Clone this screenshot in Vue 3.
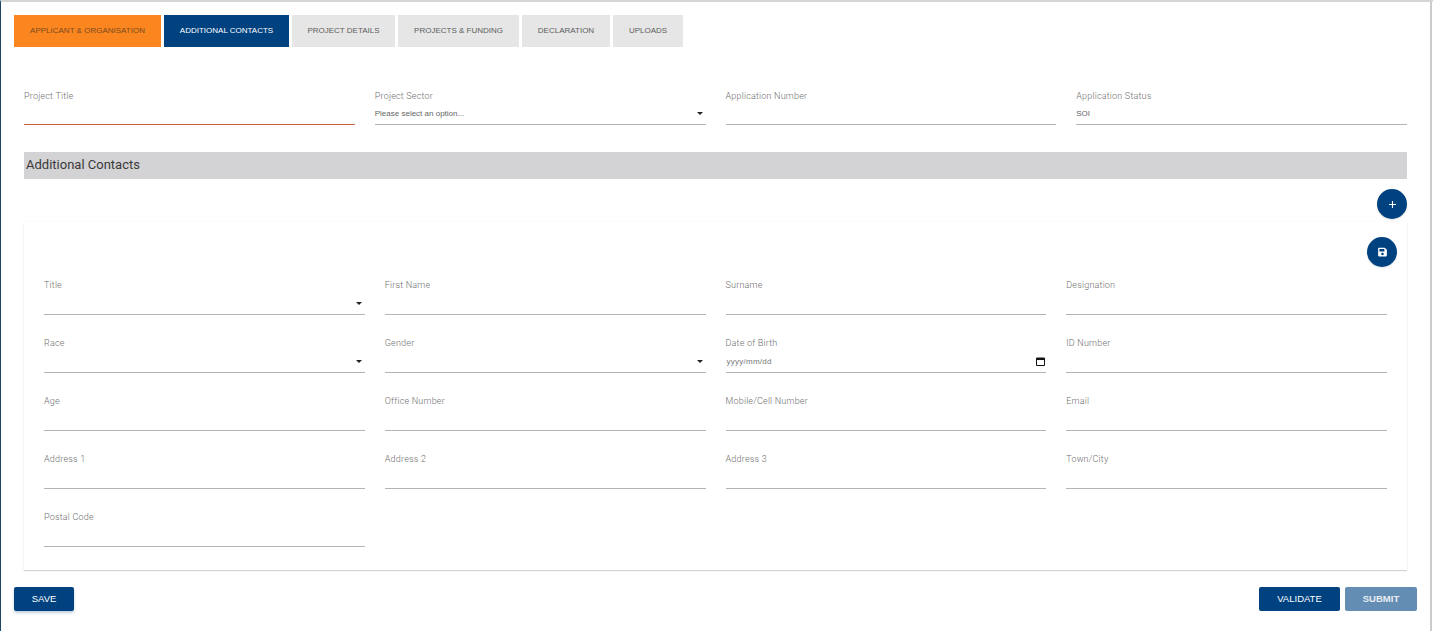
<script setup>
const tabs = [
  { label: "APPLICANT & ORGANISATION", cls: "tab-done", width: "147px" },
  { label: "ADDITIONAL CONTACTS", cls: "tab-active", width: "125px" },
  { label: "PROJECT DETAILS", cls: "tab-details", width: "103px" },
  { label: "PROJECTS & FUNDING", cls: "", width: "121px" },
  { label: "DECLARATION", cls: "", width: "88px" },
  { label: "UPLOADS", cls: "", width: "70px" },
];

const contactFields = [
  { label: "Title", type: "select" },
  { label: "First Name" },
  { label: "Surname" },
  { label: "Designation" },
  { label: "Race", type: "select" },
  { label: "Gender", type: "select" },
  { label: "Date of Birth", type: "date" },
  { label: "ID Number" },
  { label: "Age" },
  { label: "Office Number" },
  { label: "Mobile/Cell Number" },
  { label: "Email" },
  { label: "Address 1" },
  { label: "Address 2" },
  { label: "Address 3" },
  { label: "Town/City" },
  { label: "Postal Code" },
];
</script>

<template>
  <div class="page">
    <nav class="tabs">
      <button
        v-for="tab in tabs"
        :key="tab.label"
        class="tab"
        :class="tab.cls"
        :style="{ width: tab.width }"
      >
        {{ tab.label }}
      </button>
    </nav>

    <section class="project-fields">
      <div class="field field-invalid">
        <label>Project Title</label>
        <div class="control"></div>
      </div>
      <div class="field">
        <label>Project Sector</label>
        <div class="control">
          <span class="value">Please select an option...</span>
          <span class="caret"></span>
        </div>
      </div>
      <div class="field">
        <label>Application Number</label>
        <div class="control"></div>
      </div>
      <div class="field">
        <label>Application Status</label>
        <div class="control"><span class="value">SOI</span></div>
      </div>
    </section>

    <h2 class="section-title">Additional Contacts</h2>

    <div class="add-row">
      <button class="fab" aria-label="Add contact">
        <svg width="9" height="9" viewBox="0 0 9 9">
          <path d="M4.5 1v7M1 4.5h7" stroke="#fff" stroke-width="1.1" fill="none" />
        </svg>
      </button>
    </div>

    <div class="card">
      <div class="card-actions">
        <button class="fab" aria-label="Save contact">
          <svg width="9" height="10" viewBox="0 0 448 512">
            <path
              fill="#fff"
              d="M433.941 129.941l-83.882-83.882A48 48 0 0 0 316.118 32H48C21.49 32 0 53.49 0 80v352c0 26.51 21.49 48 48 48h352c26.51 0 48-21.49 48-48V163.882a48 48 0 0 0-14.059-33.941zM224 416c-35.346 0-64-28.654-64-64 0-35.346 28.654-64 64-64s64 28.654 64 64c0 35.346-28.654 64-64 64zm96-304.52V212c0 6.627-5.373 12-12 12H76c-6.627 0-12-5.373-12-12V108c0-6.627 5.373-12 12-12h228.52c3.183 0 6.235 1.264 8.485 3.515l3.48 3.48A11.996 11.996 0 0 1 320 111.48z"
            />
          </svg>
        </button>
      </div>

      <div class="contact-grid">
        <div v-for="field in contactFields" :key="field.label" class="field">
          <label>{{ field.label }}</label>
          <div class="control">
            <span v-if="field.type === 'select'" class="caret"></span>
            <template v-if="field.type === 'date'">
              <span class="value value-date">yyyy/mm/dd</span>
              <svg class="calendar" width="9" height="9" viewBox="0 0 9 9">
                <path d="M0.5 1h8v7.5h-8z" fill="none" stroke="#111" />
                <path d="M0.5 1h8v2h-8z" fill="#111" />
              </svg>
            </template>
          </div>
        </div>
      </div>
    </div>

    <footer class="actions">
      <button class="btn btn-save">SAVE</button>
      <div class="actions-right">
        <button class="btn btn-validate">VALIDATE</button>
        <button class="btn btn-submit">SUBMIT</button>
      </div>
    </footer>
  </div>
</template>

<style scoped>
.page {
  box-sizing: border-box;
  width: 1433px;
  height: 631px;
  overflow: hidden;
  border-top: 2px solid #d3d6d3;
  border-left: 1px solid #1f4466;
  background: #fff;
  padding: 13px 0 0 13px;
  font-family: "Liberation Sans", Arial, sans-serif;
  position: relative;
}

.page::after {
  content: "";
  position: absolute;
  top: 0;
  bottom: 0;
  left: 1429px;
  width: 2px;
  background: #c9cbcd;
}

.tabs {
  display: flex;
  gap: 3px;
  height: 32px;
}

.tab {
  box-sizing: border-box;
  height: 32px;
  padding: 0 0 2px;
  border: none;
  background: #e6e6e6;
  color: #5c5c5c;
  font-family: inherit;
  font-size: 8px;
  white-space: nowrap;
}

.tab-done {
  background: #fb861f;
  color: #7a4a20;
}

.tab-active {
  background: #00427f;
  color: #fff;
}

.project-fields,
.contact-grid {
  display: grid;
  grid-template-columns: repeat(4, 1fr);
  column-gap: 20px;
}

.project-fields {
  width: 1383px;
  margin: 42px 0 0 10px;
}

.field label {
  display: block;
  height: 14px;
  line-height: 14px;
  font-family: Roboto, sans-serif;
  font-size: 9px;
  font-weight: 300;
  letter-spacing: 0.2px;
  color: #6f6f6f;
}

.control {
  box-sizing: border-box;
  position: relative;
  display: flex;
  align-items: center;
  height: 20px;
  margin-top: 2px;
  padding-bottom: 2px;
  border-bottom: 1px solid #b4b4b4;
}

.contact-grid .control {
  height: 21px;
}

.field-invalid .control {
  border-bottom-color: #c9623a;
}

.value {
  font-family: "Liberation Sans", Arial, sans-serif;
  font-size: 8px;
  color: #666;
}

.value-date {
  padding-left: 1px;
  letter-spacing: 0.25px;
  color: #777;
}

.caret {
  position: absolute;
  right: 3px;
  bottom: 9px;
  border-left: 3px solid transparent;
  border-right: 3px solid transparent;
  border-top: 3px solid #222;
}

.calendar {
  position: absolute;
  right: 1px;
  bottom: 6px;
}

.section-title {
  box-sizing: border-box;
  width: 1383px;
  height: 27px;
  margin: 27px 0 0 10px;
  padding-left: 2px;
  background: #d3d2d4;
  color: #3a3a3a;
  font-family: Roboto, sans-serif;
  font-size: 13px;
  font-weight: 400;
  line-height: 25px;
}

.add-row {
  display: flex;
  justify-content: flex-end;
  width: 1383px;
  height: 43px;
  margin-left: 10px;
  padding-top: 10px;
  box-sizing: border-box;
}

.fab {
  display: flex;
  align-items: center;
  justify-content: center;
  width: 30px;
  height: 30px;
  padding: 0;
  border: none;
  border-radius: 50%;
  background: #00427f;
  box-shadow: 0 1px 2px rgba(0, 0, 0, 0.12);
}

.card {
  box-sizing: border-box;
  width: 1383px;
  height: 348px;
  margin-left: 10px;
  padding: 15px 20px 0;
  box-shadow: 0 1px 1px rgba(0, 0, 0, 0.16), 0 0 2px rgba(0, 0, 0, 0.05);
}

.card-actions {
  display: flex;
  justify-content: flex-end;
  margin-right: -10px;
  height: 30px;
}

.contact-grid {
  margin-top: 11px;
  row-gap: 21px;
}

.actions {
  display: flex;
  justify-content: space-between;
  width: 1403px;
  margin-top: 17px;
}

.actions-right {
  display: flex;
  gap: 5px;
}

.btn {
  height: 24px;
  padding: 0 0 1px;
  border: none;
  border-radius: 2px;
  color: #fff;
  font-family: inherit;
  font-size: 9.5px;
}

.btn-save {
  width: 60px;
  background: #00427f;
  box-shadow: 0 2px 3px rgba(0, 66, 127, 0.25);
}

.btn-validate {
  width: 81px;
  background: #00427f;
}

.btn-submit {
  width: 72px;
  background: #648db3;
  color: #e8eef4;
  font-weight: 700;
}
</style>

<style>
html,
body {
  margin: 0;
  background: #fff;
}
</style>
